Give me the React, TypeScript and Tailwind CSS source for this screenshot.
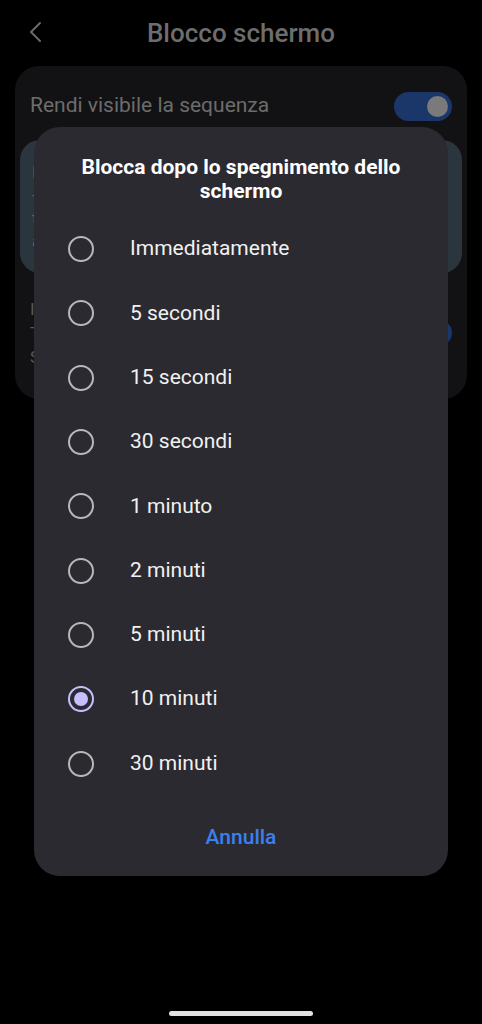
const options = [
  'Immediatamente',
  '5 secondi',
  '15 secondi',
  '30 secondi',
  '1 minuto',
  '2 minuti',
  '5 minuti',
  '10 minuti',
  '30 minuti',
];

const selected = '10 minuti';

function Radio({ checked }: { checked: boolean }) {
  if (checked) {
    return (
      <span className="w-[26px] h-[26px] rounded-full border-[2.5px] border-[#c6bfff] flex items-center justify-center shrink-0">
        <span className="w-[14px] h-[14px] rounded-full bg-[#c6bfff]" />
      </span>
    );
  }
  return <span className="w-[26px] h-[26px] rounded-full border-[2.5px] border-[#b8b8b8] shrink-0" />;
}

export default function App() {
  return (
    <div className="relative w-[482px] h-[1024px] bg-black overflow-hidden font-['Roboto','Liberation_Sans',sans-serif]">
      {/* dimmed settings page behind the dialog */}
      <div className="flex items-center h-[66px] px-[26px] relative">
        <svg width="20" height="24" viewBox="0 0 20 24" className="mt-[-2px]">
          <path d="M14 3 L5 12 L14 21" fill="none" stroke="#6a6a6a" strokeWidth="2" strokeLinecap="round" strokeLinejoin="round" />
        </svg>
        <div className="absolute inset-x-0 top-0 h-[66px] flex items-center justify-center text-[26px] font-medium text-[#6d6d6d]">
          Blocco schermo
        </div>
      </div>

      <div className="mx-[15px] rounded-[24px] bg-[#121214] h-[333px] pt-[22px] px-[15px]">
        <div className="flex items-center justify-between h-[36px]">
          <span className="text-[21px] text-[#6c6c6c]">Rendi visibile la sequenza</span>
          <div className="w-[58px] h-[29px] rounded-full bg-[#1b3669] flex items-center justify-end pr-[4px]">
            <span className="w-[21px] h-[21px] rounded-full bg-[#7a7a7a]" />
          </div>
        </div>
        <div className="mt-[16px] mx-[-10px] h-[133px] rounded-[20px] bg-[#2a353e] flex flex-col justify-center px-[12px] text-[#5b656c] text-[17px] leading-[23px]">
          <span>I</span>
          <span>-</span>
          <span>t</span>
          <span>a</span>
        </div>
        <div className="mt-[24px] flex justify-between items-center text-[17px] leading-[24px] text-[#5a5a5a]">
          <div className="flex flex-col">
            <span>I</span>
            <span>T</span>
            <span>S</span>
          </div>
          <span className="w-[26px] h-[26px] rounded-full bg-[#1b3669]" />
        </div>
      </div>

      {/* dialog */}
      <div className="absolute left-[34px] top-[127px] w-[414px] h-[749px] rounded-[26px] bg-[#2b2a30] flex flex-col">
        <div className="pt-[28px] px-[36px] text-center text-white font-bold text-[21px] leading-[24px]">
          Blocca dopo lo spegnimento dello schermo
        </div>
        <div className="mt-[14px] flex flex-col">
          {options.map((o) => (
            <div key={o} className="h-[64.3px] flex items-center pl-[34px]">
              <Radio checked={o === selected} />
              <span className="ml-[36px] text-[21px] text-[#f1f1f1]">{o}</span>
            </div>
          ))}
        </div>
        <div className="flex-1 flex items-center justify-center pt-[4px]">
          <span className="text-[21px] font-medium text-[#3b80ef]">Annulla</span>
        </div>
      </div>

      {/* home indicator */}
      <div className="absolute left-[169px] top-[1011px] w-[144px] h-[5px] rounded-full bg-[#e2e2e2]" />
    </div>
  );
}
